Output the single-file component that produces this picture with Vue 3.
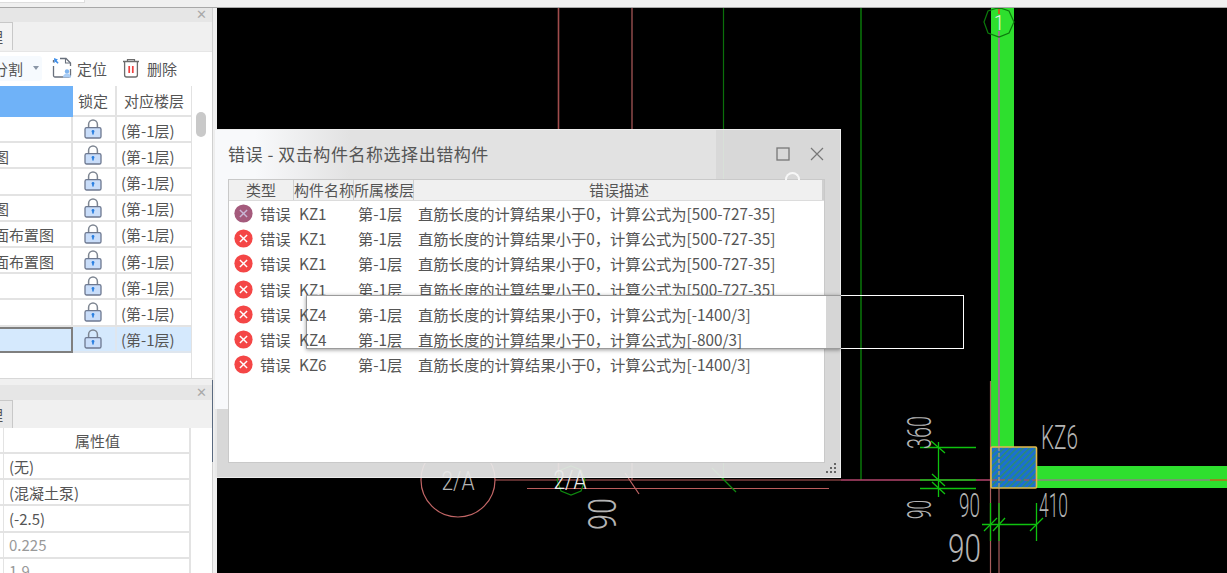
<script setup>
const topRows = [
  { name: '' }, { name: '图' }, { name: '' }, { name: '图' }, { name: '面布置图' },
  { name: '面布置图' }, { name: '' }, { name: '' }, { name: '', selected: true },
]
const props = [
  { value: '(无)' }, { value: '(混凝土泵)' }, { value: '(-2.5)' },
  { value: '0.225', muted: true }, { value: '1.9', muted: true },
]
const errors = [
  { name: 'KZ1', formula: '[500-727-35]', hover: true },
  { name: 'KZ1', formula: '[500-727-35]' },
  { name: 'KZ1', formula: '[500-727-35]' },
  { name: 'KZ1', formula: '[500-727-35]' },
  { name: 'KZ4', formula: '[-1400/3]', top: true },
  { name: 'KZ4', formula: '[-800/3]', top: true },
  { name: 'KZ6', formula: '[-1400/3]' },
]
const gripDots = [[8, 0], [4, 4], [8, 4], [0, 8], [4, 8], [8, 8]]
</script>

<template>
  <div class="app">
    <div class="top-strip"><div class="top-tab"></div></div>
    <div class="main">
      <aside class="side">
        <section class="panel-a">
          <div class="title-bar"><span class="close">✕</span></div>
          <div class="tab-row"><div class="tab"><span>管理</span></div></div>
          <div class="toolbar">
            <div class="tool-split"><span class="split-label">分割</span><i class="caret"></i></div>
            <svg class="tool-icon locate" viewBox="0 0 20 22" width="20" height="22">
              <path d="M8 1.5h6l4.5 4.5v3M18.5 12v6.5a1.5 1.5 0 0 1-1.5 1.5H3a1.5 1.5 0 0 1-1.5-1.5V9M1.5 5.5V3" fill="none" stroke="#69707c" stroke-width="1.3"/>
              <path d="M13.5 1.5V6h5" fill="none" stroke="#69707c" stroke-width="1.1"/>
              <path d="M2 1l4 1.6-1.4 1 2 2.2-1 1-2.2-2-1 1.4z" fill="#3f8ee8"/>
              <circle cx="15" cy="14.5" r="2.2" fill="#7fb4ee"/>
              <path d="M11 20.5c0-3 2-4 4-4s4 1 4 4z" fill="#a9cdf5"/>
            </svg>
            <span class="tool-text">定位</span>
            <svg class="tool-icon trash" viewBox="0 0 18 20" width="18" height="20">
              <path d="M5.5 3V1.6h7V3" fill="none" stroke="#6c6c6c" stroke-width="1.2"/>
              <path d="M1 3.5h16" stroke="#6c6c6c" stroke-width="1.5"/>
              <path d="M2.6 4v13a2 2 0 0 0 2 2h8.8a2 2 0 0 0 2-2V4" fill="none" stroke="#6c6c6c" stroke-width="1.3"/>
              <path d="M7.2 8v7M10.8 8v7" stroke="#ee4040" stroke-width="1.7"/>
            </svg>
            <span class="tool-text del">删除</span>
          </div>
          <div class="table-wrap">
            <div class="floor-table">
              <div class="floor-row head">
                <div class="cell name active"></div>
                <div class="cell lock">锁定</div>
                <div class="cell floor center">对应楼层</div>
              </div>
              <div v-for="(r, i) in topRows" :key="i" class="floor-row" :class="{ selected: r.selected }">
                <div class="cell name">{{ r.name }}</div>
                <div class="cell lock">
                  <svg viewBox="0 0 18 20" width="18" height="20">
                    <path d="M4.6 9V5.4a4.4 4.4 0 0 1 8.8 0V9" fill="none" stroke="#7d8591" stroke-width="1.5"/>
                    <rect x="1" y="8.6" width="16" height="10.4" rx="1.6" fill="#c9ddf9" stroke="#6d7890" stroke-width="1.3"/>
                    <path d="M9 12v3.4" stroke="#2a7fe0" stroke-width="1.6"/>
                    <circle cx="9" cy="12.4" r="1.4" fill="#2a7fe0"/>
                  </svg>
                </div>
                <div class="cell floor">(第-1层)</div>
              </div>
            </div>
            <div class="scroll-col"><div class="thumb"></div></div>
          </div>
        </section>
        <section class="panel-b">
          <div class="title-bar"><span class="close">✕</span></div>
          <div class="tab-row"><div class="tab b"><span>管理</span></div></div>
          <div class="prop-table">
            <div class="prop-row head"><div class="stub"></div><div class="prop-val center">属性值</div></div>
            <div v-for="(p, i) in props" :key="i" class="prop-row">
              <div class="stub"></div>
              <div class="prop-val" :class="{ muted: p.muted }">{{ p.value }}</div>
            </div>
          </div>
        </section>
      </aside>

      <div class="canvas">
        <svg class="cad" viewBox="217 8 1010 565" width="1010" height="565">
          <defs>
            <pattern id="hatch" width="4.5" height="4.5" patternUnits="userSpaceOnUse" patternTransform="rotate(45)">
              <rect width="4.5" height="4.5" fill="#1b6fd2"/>
              <rect width="1.5" height="4.5" fill="#2c8c70"/>
            </pattern>
          </defs>
          <!-- upper grid lines -->
          <path d="M558.5 8V480" stroke="#a04c4c" stroke-width="1.6" fill="none"/>
          <path d="M632 8V480" stroke="#854545" stroke-width="1.6" fill="none"/>
          <path d="M723.5 8V480" stroke="#0a700a" stroke-width="1.2" fill="none"/>
          <path d="M861 8V480" stroke="#0c960c" stroke-width="1.2" fill="none"/>
          <!-- walls -->
          <rect x="991" y="8" width="23" height="440" fill="#2edf2e"/>
          <rect x="1036" y="466" width="191" height="22" fill="#2edf2e"/>
          <path d="M999 31V447" stroke="#b45aa8" stroke-width="1.6"/>
          <path d="M999 8V14" stroke="#e24a1a" stroke-width="1.6"/>
          <path d="M1037 480H1210" stroke="#b45aa8" stroke-width="1.2"/>
          <path d="M1210 480H1227" stroke="#e24a1a" stroke-width="1.2"/>
          <path d="M841 480H990" stroke="#a8148c" stroke-width="1.2"/>
          <!-- axis bubble -->
          <polygon points="999,7.5 1009,11 1014,22 1009,33 999,37 988,33 984,22 988,11" fill="none" stroke="#0b7a0b" stroke-width="1.2"/>
          <text x="999" y="30" class="cad-text white" text-anchor="middle" font-size="21" font-weight="500" textLength="10" lengthAdjust="spacingAndGlyphs">1</text>
          <!-- red axes -->
          <path d="M990.5 381V573M999 447V573" stroke="#a85e5e" stroke-width="1.2" fill="none"/>
          <path d="M495 480H990M527 488.5H829" stroke="#b85c5c" stroke-width="1.2" fill="none"/>
          <circle cx="458" cy="480" r="37" fill="none" stroke="#c26666" stroke-width="1.2"/>
          <polygon points="571,466 581,470 585,480 581,491 571,495 561,491 557,480 561,470" fill="none" stroke="#0f8a0f" stroke-width="1.2"/>
          <text x="458" y="490" class="cad-text" text-anchor="middle" font-size="26" textLength="33" lengthAdjust="spacingAndGlyphs">2/A</text>
          <text x="570" y="489" class="cad-text white" text-anchor="middle" font-size="26" textLength="33" lengthAdjust="spacingAndGlyphs">2/A</text>
          <path d="M625 473L639 494" stroke="#c26666" stroke-width="1.2"/>
          <path d="M712 468L736 492" stroke="#0f8a0f" stroke-width="1.2"/>
          <text transform="translate(616 530) rotate(-90)" class="cad-text" font-size="38" textLength="32" lengthAdjust="spacingAndGlyphs">90</text>
          <!-- column -->
          <rect x="991" y="447" width="45.5" height="41" fill="url(#hatch)" stroke="#e6ba48" stroke-width="1.6" rx="1"/>
          <path d="M999 447V488" stroke="#e0a060" stroke-width="1" stroke-dasharray="4 2"/>
          <path d="M992 480H1036" stroke="#d04a3a" stroke-width="1" stroke-dasharray="5 3"/>
          <!-- dimensions -->
          <g stroke="#0fc20f" stroke-width="1.3" fill="none">
            <path d="M938.5 442V497"/>
            <path d="M920 447.5H976M920 480H976M920 488.5H976"/>
            <path d="M931 441L945 453M932 474L945 486M932 482L945 494"/>
            <path d="M982 524.5H1037"/>
            <path d="M990.5 503V541M999 503V541M1036.5 503V541"/>
            <path d="M984 531L997 518M993 531L1005 518M1030 531L1043 518"/>
          </g>
          <text transform="translate(931 449) rotate(-90)" class="cad-text" font-size="34" textLength="33" lengthAdjust="spacingAndGlyphs">360</text>
          <text transform="translate(931 519) rotate(-90)" class="cad-text" font-size="34" textLength="19" lengthAdjust="spacingAndGlyphs">90</text>
          <text x="959" y="517" class="cad-text" font-size="33" textLength="21" lengthAdjust="spacingAndGlyphs">90</text>
          <text x="1039" y="517" class="cad-text" font-size="33" textLength="29" lengthAdjust="spacingAndGlyphs">410</text>
          <text x="948" y="562" class="cad-text" font-size="38" textLength="33" lengthAdjust="spacingAndGlyphs">90</text>
          <text x="1041" y="449" class="cad-text" font-size="33" textLength="37" lengthAdjust="spacingAndGlyphs">KZ6</text>
        </svg>
      </div>
    </div>

    <i class="side-edge"></i>

    <div class="dialog">
      <i class="ghost-arc"></i>
      <div class="dlg-title">
        <span class="dlg-caption">错误 - 双击构件名称选择出错构件</span>
        <span class="win-btns">
          <svg viewBox="0 0 14 14" width="14" height="14"><rect x="1" y="1" width="12" height="12" fill="none" stroke="#777" stroke-width="1.3"/></svg>
          <svg viewBox="0 0 14 14" width="14" height="14"><path d="M1 1L13 13M13 1L1 13" stroke="#777" stroke-width="1.2"/></svg>
        </span>
      </div>
      <div class="err-panel">
        <div class="err-head">
          <div class="h-type">类型</div>
          <div class="h-col">构件名称</div>
          <div class="h-col">所属楼层</div>
          <div class="h-desc">错误描述</div>
        </div>
        <div v-for="(e, i) in errors" :key="i" class="err-row" :class="{ raised: e.top }">
          <svg class="err-icon" viewBox="0 0 20 20" width="19" height="19">
            <circle cx="10" cy="10" r="9.6" :fill="e.hover ? '#a45a7c' : '#f44646'"/>
            <path d="M6.2 6.2L13.8 13.8M13.8 6.2L6.2 13.8" :stroke="e.hover ? '#c9b7d6' : '#ffffff'" stroke-width="1.5"/>
          </svg>
          <span class="t-kind">错误</span>
          <span>{{ e.name }}</span>
          <span>第-1层</span>
          <span class="t-desc">直筋长度的计算结果小于0，计算公式为{{ e.formula }}</span>
        </div>
      </div>
      <svg class="grip" viewBox="0 0 10 10" width="10" height="10">
        <rect v-for="(d, i) in gripDots" :key="i" :x="d[0]" :y="d[1]" width="2" height="2" fill="#666"/>
      </svg>
      <div class="rubber"></div>
    </div>
  </div>
</template>

<style scoped>
.app {
  position: relative;
  width: 1227px;
  height: 573px;
  display: flex;
  flex-direction: column;
  overflow: hidden;
  background: #f0f0f0;
  font-family: "Noto Sans CJK SC", "Liberation Sans", sans-serif;
  font-size: 15px;
  color: #555;
}
.top-strip { height: 8px; flex: none; box-sizing: border-box; border-bottom: 1px solid #a8a8a8; }
.top-tab { width: 85px; height: 3px; background: #fff; border: solid #ddd; border-width: 0 1px 1px 0; box-sizing: border-box; }
.main { flex: 1; min-height: 0; display: flex; }
.side {
  width: 212px; flex: none; display: flex; flex-direction: column; gap: 6px;
  border-right: 1px solid #d0d0d0; box-sizing: content-box;
}
.panel-a { height: 371px; display: flex; flex-direction: column; border-bottom: 1px solid #d8d8d8; box-sizing: border-box; }
.panel-b { flex: 1; min-height: 0; display: flex; flex-direction: column; overflow: hidden; }
.title-bar { height: 14px; flex: none; background: #e6e6e6; display: flex; justify-content: flex-end; align-items: center; padding-right: 5px; }
.panel-b .title-bar { height: 15px; }
.close { font-size: 13px; line-height: 14px; color: #a9a9a9; font-family: "DejaVu Sans", sans-serif; }
.tab-row { height: 29px; flex: none; background: #f0f0f0; }
.panel-b .tab-row { height: 28px; }
.tab {
  width: 13px; height: 28px; box-sizing: border-box; background: #f3f3f3;
  border: solid #c8c8c8; border-width: 1px 1px 0 0; overflow: hidden;
  display: flex; justify-content: flex-end; align-items: center; line-height: 1; padding-right: 9px;
}
.tab span { flex: none; }
.tab.b { background: #e9e9e9; }
.toolbar {
  height: 35px; flex: none; background: #fff; display: flex; align-items: center;
  border-top: 1px solid #e6e6e6; box-sizing: border-box; padding-bottom: 2px;
}
.tool-split {
  width: 42px; height: 25px; flex: none; background: #f6fafe; border-radius: 0 3px 3px 0;
  display: flex; align-items: center; overflow: hidden; position: relative;
}
.split-label { flex: none; margin-left: -7px; }
.caret { width: 0; height: 0; border: 3px solid transparent; border-top: 4px solid #8a96a6; border-bottom: 0; margin-left: 10px; flex: none; }
.tool-icon { flex: none; }
.locate { margin-left: 10px; }
.trash { margin-left: 15px; }
.tool-text { margin-left: 5px; flex: none; }
.tool-text.del { margin-left: 7px; }
.table-wrap { flex: 1; min-height: 0; display: flex; background: #fff; }
.floor-table { width: 192px; flex: none; border-right: 1px solid #e2e2e2; box-sizing: border-box; }
.floor-row { display: flex; height: 26.2px; box-sizing: border-box; }
.floor-row.head { height: 31px; }
.cell {
  box-sizing: border-box; display: flex; align-items: center;
  border: solid #e3e3e3; border-width: 0 2px 2px 0; overflow: hidden; white-space: nowrap;
}
.cell.name { width: 73px; text-indent: -6px; padding-top: 2px; }
.cell.lock { width: 44px; justify-content: center; padding-right: 2px; }
.cell.floor { width: 74px; padding: 2px 0 0 4px; border-right-width: 0; }
.cell.center { justify-content: center; padding: 0; }
.cell.active { background: #6fb2f8; border-color: #6fb2f8; }
.selected .cell { background: #d5e9fd; border-color: #dfe6ee; }
.selected .cell.name { border: solid #7f7f7f; border-width: 2px 2px 2px 0; background: #d5e9fd; }
.scroll-col { flex: 1; display: flex; justify-content: center; padding-right: 2px; }
.thumb { width: 10px; height: 25px; margin-top: 26px; background: #c9c9c9; border-radius: 5px; }
.prop-table { flex: 1; background: #fff; }
.prop-row { display: flex; height: 26.2px; width: 191px; }
.prop-row.head { height: 26px; }
.stub { width: 4px; flex: none; box-sizing: border-box; border: solid #e3e3e3; border-width: 0 1px 2px 0; }
.prop-val {
  flex: 1; box-sizing: border-box; display: flex; align-items: center; padding-left: 5px;
  border: solid #e3e3e3; border-width: 0 2px 2px 0; white-space: nowrap;
}
.prop-val.center { justify-content: center; padding-left: 2px; }
.prop-val.muted { color: #999; }
.canvas { flex: 1; min-width: 0; margin-left: 4px; background: #000; overflow: hidden; }
.cad { display: block; }
.cad-text { font-family: "Roboto", "Liberation Sans", sans-serif; font-weight: 300; fill: #b4b4b4; }
.cad-text.white { fill: #efefef; }
.side-edge { position: absolute; left: 212px; top: 380px; width: 1px; height: 82px; background: #5a6a80; }

.dialog {
  position: absolute; left: 214px; top: 129px; width: 627px; height: 349px;
  box-sizing: border-box; display: flex; flex-direction: column;
  border: 1px solid #ededed;
  background:
    linear-gradient(to right, #f8f9fb 0, #f8f9fb 40px, #e2e2e2 135px, #e2e2e2 501px, transparent 501px) 0 0 / 100% 279px no-repeat,
    rgba(232, 232, 232, 0.93);
}
.ghost-arc {
  position: absolute; left: 570px; top: 42px; width: 15px; height: 8px; box-sizing: border-box;
  border: 2px solid #f7f7f7; border-bottom: 0; border-radius: 8px 8px 0 0;
}
.dlg-title { height: 49px; flex: none; display: flex; align-items: center; justify-content: space-between; padding: 0 16px 2px 13px; box-sizing: border-box; }
.dlg-caption { font-size: 17px; color: #555; letter-spacing: 0.55px; white-space: nowrap; }
.win-btns { display: flex; gap: 20px; margin-right: 0; }
.win-btns svg { display: block; }
.err-panel { flex: 1; min-height: 0; margin: 0 15px 14px 13px; background: #fff; border: 1px solid #c9c9c9; }
.err-head { height: 21px; display: flex; background: #f0f0f0; border-bottom: 1px solid #dcdcdc; box-sizing: border-box; line-height: 20px; text-align: center; white-space: nowrap; }
.h-type { width: 65px; flex: none; border-right: 1px solid #cfcfcf; box-sizing: border-box; }
.h-col { width: 60px; flex: none; border-right: 1px solid #cfcfcf; box-sizing: border-box; }
.h-desc { flex: 1; border-right: 2px solid #cfcfcf; padding-left: 2px; }
.err-row {
  display: grid; grid-template-columns: 31px 39px 59px 60px 1fr; height: 25.2px; align-items: center;
  white-space: nowrap; line-height: 25px; font-size: 15.3px;
}
.err-row.raised { position: relative; z-index: 2; }
.err-icon { margin-left: 5px; display: block; }
.grip { position: absolute; right: 4px; bottom: 4px; }
.rubber {
  position: absolute; left: 91px; top: 165px; width: 658px; height: 54px; box-sizing: border-box;
  border: 1px solid #fff; z-index: 1;
}
.rubber::before {
  content: ""; position: absolute; left: -1px; top: -1px; bottom: -1px; width: 535px; box-sizing: border-box;
  border: solid #9b9b9b; border-width: 1px 0 1px 1px;
  background: linear-gradient(to right, #fff 0, #fff 519px, #d6d6d6 519px);
  box-shadow: 0 1px 4px rgba(0, 0, 0, 0.4);
}
</style>

<style>
html, body { margin: 0; overflow: hidden; background: #f0f0f0; }
</style>
